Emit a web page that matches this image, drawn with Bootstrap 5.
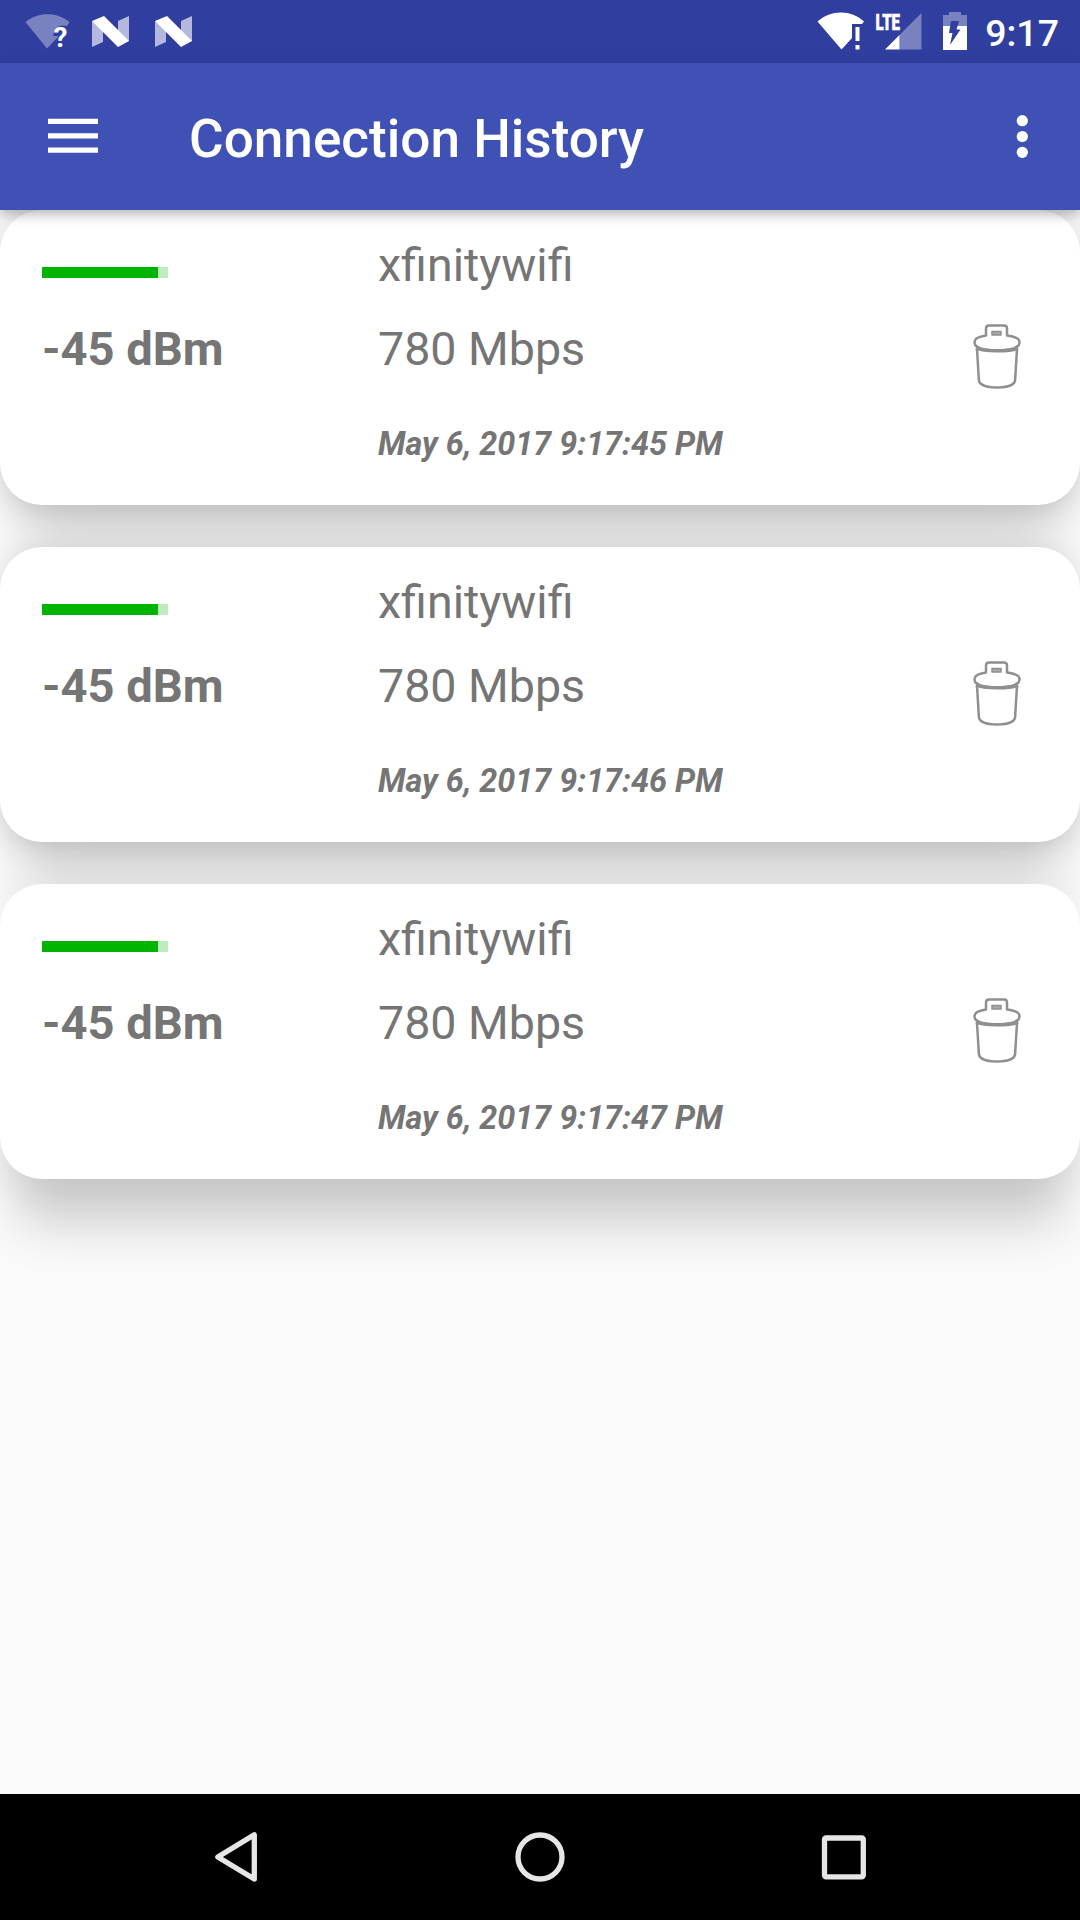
<!DOCTYPE html>
<html lang="en">
<head>
<meta charset="utf-8">
<meta name="viewport" content="width=device-width, initial-scale=1">
<title>Connection History</title>
<link href="https://cdn.jsdelivr.net/npm/bootstrap@5.3.0/dist/css/bootstrap.min.css" rel="stylesheet">
<style>
  body { font-family: Roboto, "Noto Sans", sans-serif; background: #fafafa; color: #757575; height: 1920px; overflow: hidden; }
  svg { display: block; flex: none; }
  .status-bar { height: 63px; background: #303f9f; color: #fff; padding-right: 21px; }
  .notice { margin: 15px 0 0 11px; }
  .notice + .notice { margin-left: 23px; }
  .clock { font-size: 37.5px; line-height: 63px; font-weight: 500; padding-top: 2px; }
  .app-bar { height: 147px; background: #3f51b5; z-index: 3; box-shadow: 0 4px 12px rgba(0,0,0,.3); }
  .icon-btn { border: 0; background: none; padding: 0; }
  .app-title { font-size: 53.1px; line-height: 62px; font-weight: 500; color: #fff; margin: 4px 0 0 91px; }
  .history { gap: 42px; }
  .entry { --bs-card-border-radius: 42px; --bs-card-border-width: 0; --bs-card-bg: #fff; color: #757575; height: 295px;
    box-shadow: 0 64px 52px -20px rgba(0,0,0,.135), 0 4px 30px rgba(0,0,0,.15); }
  .entry:last-child { box-shadow: 0 62px 50px -16px rgba(0,0,0,.17), 0 6px 44px rgba(0,0,0,.08); }
  .entry .card-body { padding: 0 42px; }
  .signal-col { width: 336px; }
  .signal { height: 11px; width: 126px; margin-top: 57px; border-radius: 0; background: #bfecbf; }
  .signal .progress-bar { background: #00b400; }
  .level { font-size: 47.1px; line-height: 56px; margin-top: 43px; }
  .ssid, .speed { font-size: 46.6px; line-height: 56px; }
  .ssid { margin-top: 27px; }
  .speed { margin-top: 28px; }
  .stamp { font-size: 32.3px; line-height: 38px; margin-top: 48px; }
  .trash { margin: 112px 15px 0 0; }
  .nav-keys { height: 126px; background: #000; }
</style>
<script src="https://cdn.jsdelivr.net/npm/bootstrap@5.3.0/dist/js/bootstrap.bundle.min.js"></script>
</head>
<body class="d-flex flex-column">
<svg width="0" height="0" class="position-absolute" aria-hidden="true">
  <symbol id="bin" viewBox="0 0 52 70">
    <g fill="#fff" stroke="#8f8f8f" stroke-width="2.5" stroke-linejoin="round">
      <path d="M6 27l1.9 31c.3 5 8 7.5 18.1 7.5S43.800 63 44.100 58L46 27"/>
      <path d="M15 13.5V6.500Q15 3.500 18 3.500h15q3 0 3 3V13.500C44 14.500 48.500 16.500 48.500 20c0 1.500-.3 2.500-1 3.500C44.500 26.500 36 28.500 26 28.500S7.500 26.500 4.500 23.500c-.7-1-1-2-1-3.500C3.500 16.500 8 14.500 15 13.500z"/>
      <path d="M5 26C13 29.700 39 29.700 47 26" fill="none" stroke-width="3.5"/>
      <path d="M21 9.500h9v3.500h-9z" fill="#a8a8a8" stroke-width="1.5"/>
    </g>
  </symbol>
  <symbol id="nougat" viewBox="0 0 40 33">
    <path d="M1 6L12 12V27L1 32zM27 6L38 1V26L27 28z" fill="#b5b8de"/>
    <path d="M1 6L13 1L38 26L27 32z" fill="#fff"/>
  </symbol>
</svg>

<header class="status-bar d-flex justify-content-between flex-shrink-0">
  <div class="d-flex">
    <svg width="80" height="63" viewBox="0 0 80 63">
      <path d="M25.500 22C38 11.500 57 11.500 69.500 22L67 26Q60 24 55 29L53 36H58V37L47 48.500z" fill="#7982c1"/>
      <text x="53.500" y="47" font-size="28" font-weight="700" fill="#fff">?</text>
    </svg>
    <svg class="notice" width="40" height="33"><use href="#nougat"/></svg>
    <svg class="notice" width="40" height="33"><use href="#nougat"/></svg>
  </div>
  <div class="d-flex">
    <svg width="175" height="63" viewBox="810 0 175 63">
      <path d="M817.500 21.500C831 9.500 851 9.500 864 21.500L862 24H852V38L841.500 49.500z" fill="#fff"/>
      <path d="M855.500 27h4v14h-4zM855.500 45h4v4.500h-4z" fill="#fff"/>
      <text x="875.500" y="29.500" font-size="22.500" font-weight="900" fill="#fff" stroke="#fff" stroke-width=".6" textLength="24.500" lengthAdjust="spacingAndGlyphs">LTE</text>
      <path d="M921.500 13V49.500H899.500V35z" fill="#7982c1"/>
      <path d="M899.500 35V49.500H885z" fill="#fff"/>
      <path d="M943 15h6v-3h12v3h6v11h-24z" fill="#7982c1"/>
      <path d="M943 26h24v24h-24z" fill="#fff"/>
      <path d="M951 21h8l-2.500 8.500h4L950 45l2.500-12H949z" fill="#303f9f"/>
    </svg>
    <span class="clock">9:17</span>
  </div>
</header>

<nav class="app-bar d-flex align-items-center position-relative flex-shrink-0">
  <button class="icon-btn" aria-label="Menu">
    <svg width="98" height="147" viewBox="0 63 98 147"><path d="M48 118.700h50v5.300H48zM48 133.200h50v5.300H48zM48 147.500h50v5.300H48z" fill="#fff"/></svg>
  </button>
  <h1 class="app-title">Connection History</h1>
  <button class="icon-btn ms-auto" aria-label="More options">
    <svg width="80" height="147" viewBox="1000 63 80 147" fill="#fff"><circle cx="1022.300" cy="120.700" r="5.600"/><circle cx="1022.300" cy="136.500" r="5.600"/><circle cx="1022.300" cy="152.300" r="5.600"/></svg>
  </button>
</nav>

<main class="history d-flex flex-column flex-grow-1">
  <article class="card entry"><div class="card-body d-flex">
    <div class="signal-col"><div class="progress signal"><div class="progress-bar" style="width:92%"></div></div><div class="level fw-bold">-45 dBm</div></div>
    <div class="flex-grow-1"><div class="ssid">xfinitywifi</div><div class="speed">780 Mbps</div><div class="stamp fw-bold fst-italic">May 6, 2017 9:17:45 PM</div></div>
    <svg class="trash" width="52" height="70"><use href="#bin"/></svg>
  </div></article>
  <article class="card entry"><div class="card-body d-flex">
    <div class="signal-col"><div class="progress signal"><div class="progress-bar" style="width:92%"></div></div><div class="level fw-bold">-45 dBm</div></div>
    <div class="flex-grow-1"><div class="ssid">xfinitywifi</div><div class="speed">780 Mbps</div><div class="stamp fw-bold fst-italic">May 6, 2017 9:17:46 PM</div></div>
    <svg class="trash" width="52" height="70"><use href="#bin"/></svg>
  </div></article>
  <article class="card entry"><div class="card-body d-flex">
    <div class="signal-col"><div class="progress signal"><div class="progress-bar" style="width:92%"></div></div><div class="level fw-bold">-45 dBm</div></div>
    <div class="flex-grow-1"><div class="ssid">xfinitywifi</div><div class="speed">780 Mbps</div><div class="stamp fw-bold fst-italic">May 6, 2017 9:17:47 PM</div></div>
    <svg class="trash" width="52" height="70"><use href="#bin"/></svg>
  </div></article>
</main>

<footer class="nav-keys flex-shrink-0">
  <svg width="1080" height="126" viewBox="0 1794 1080 126" fill="none" stroke="#e6e6e6" stroke-width="5.300" stroke-linejoin="round">
    <path d="M217.800 1857L254.300 1834.800V1879z"/><circle cx="540" cy="1857" r="22"/><rect x="824.500" y="1838" width="38.800" height="38.800" rx="1.500"/>
  </svg>
</footer>
</body>
</html>
